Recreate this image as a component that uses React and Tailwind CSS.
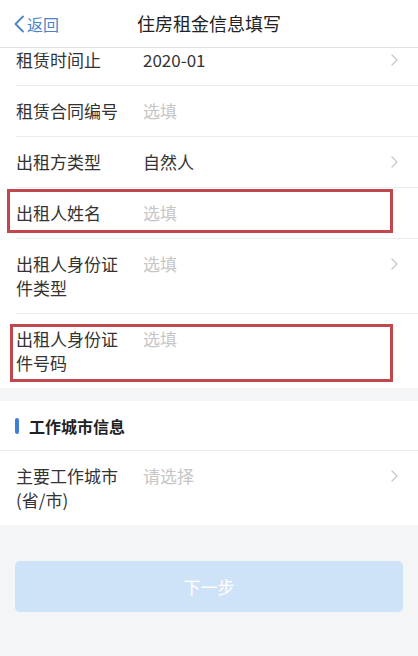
import React from "react";

const FONT = { fontFamily: '"Noto Sans CJK SC", "Noto Sans", sans-serif' };

const Chevron = () => (
  <svg width="7" height="12" viewBox="0 0 7 12" fill="none" stroke="#c8c8c8" strokeWidth="1.4" strokeLinecap="round" strokeLinejoin="round">
    <path d="M1 1l5 5-5 5" />
  </svg>
);

const Row = ({ label, value, placeholder, arrow, box, last }) => (
  <div className="relative pl-[16px]">
    <div className={`flex items-start pr-[20px] py-[13px] leading-[24px] text-[17px] ${last ? "" : "border-b border-[#ececec]"}`}>
      <div className="w-[104px] mr-[23px] text-[#333333] shrink-0">{label}</div>
      <div className={`flex-1 ${value ? "text-[#333333]" : "text-[#c6c6c6]"}`}>{value || placeholder}</div>
      {arrow && (
        <div className="h-[24px] flex items-center">
          <Chevron />
        </div>
      )}
    </div>
    {box === 1 && (
      <div className="absolute left-[7px] top-[1px] w-[386px] h-[44px] border-[3px] border-[#c0474c]" />
    )}
    {box === 2 && (
      <div className="absolute left-[10px] top-[10px] w-[383px] h-[58px] border-[3px] border-[#c0474c]" />
    )}
  </div>
);

export default function App() {
  return (
    <div className="w-full h-[656px] bg-[#f4f5f7] flex flex-col overflow-hidden" style={FONT}>
      {/* Header */}
      <div className="relative z-10 h-[48px] shrink-0 bg-white border-b border-[#e2e2e2] grid grid-cols-[1fr_auto_1fr] items-center">
        <div className="flex items-center pl-[13px] text-[#4a84c6] text-[16px]">
          <svg width="12" height="18" viewBox="0 0 12 18" fill="none" stroke="#4a84c6" strokeWidth="1.8" strokeLinecap="round" strokeLinejoin="round">
            <path d="M10 1.5L2.5 9l7.5 7.5" />
          </svg>
          <span className="ml-[2px]">返回</span>
        </div>
        <div className="text-[18px] text-[#222222]">住房租金信息填写</div>
        <div />
      </div>

      {/* Content */}
      <div className="flex-1 overflow-hidden">
        <div className="-mt-[13px] bg-white">
          <Row label="租赁时间止" value="2020-01" arrow />
          <Row label="租赁合同编号" placeholder="选填" />
          <Row label="出租方类型" value="自然人" arrow />
          <Row label="出租人姓名" placeholder="选填" box={1} />
          <Row label="出租人身份证件类型" placeholder="选填" arrow />
          <Row label="出租人身份证件号码" placeholder="选填" box={2} last />
        </div>

        <div className="mt-[13px] bg-white">
          <div className="h-[50px] flex items-center pl-[15px] border-b border-[#ececec]">
            <div className="w-[4px] h-[16px] rounded-full bg-[#3f7fd6] mr-[10px]" />
            <span className="text-[16px] font-bold text-[#222222]">工作城市信息</span>
          </div>
          <Row label="主要工作城市(省/市)" placeholder="请选择" arrow last />
        </div>

        <div className="px-[15px] mt-[36px]">
          <button className="w-full h-[51px] rounded-[5px] bg-[#cfe3f8] text-white text-[17px]">下一步</button>
        </div>
      </div>
    </div>
  );
}
